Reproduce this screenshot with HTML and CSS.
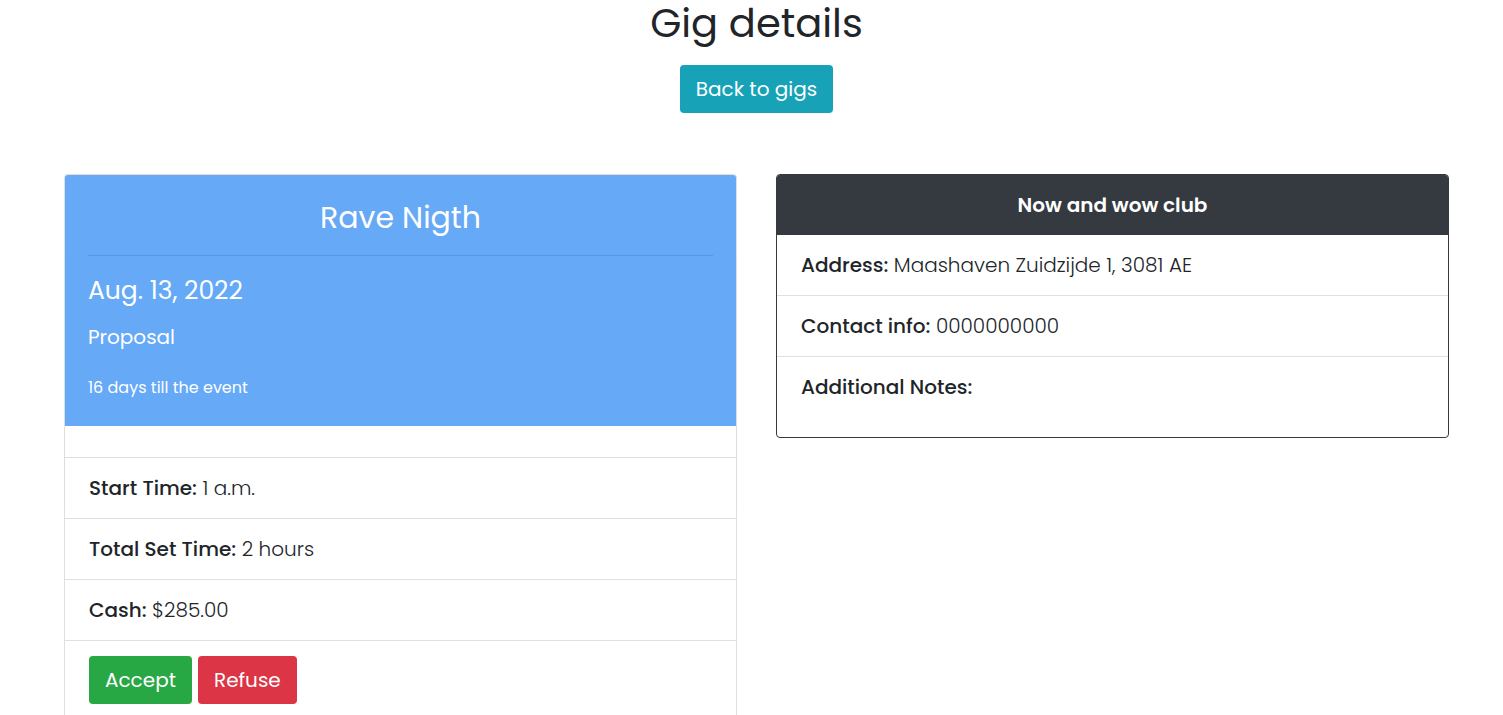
FILE: index.html
```html
<!DOCTYPE html>
<html lang="en">
<head>
<meta charset="utf-8">
<title>Gig details</title>
<link rel="stylesheet" href="styles.css">
</head>
<body>
<header class="top">
  <h1 class="page-title">Gig details</h1>
  <a class="btn btn-info" href="#">Back to gigs</a>
</header>
<main class="cards">
  <section class="card card-gig">
    <div class="gig-body">
      <h3 class="gig-title">Rave Nigth</h3>
      <hr class="gig-rule">
      <h4 class="gig-date">Aug. 13, 2022</h4>
      <p class="gig-status">Proposal</p>
      <p class="gig-days">16 days till the event</p>
    </div>
    <ul class="list">
      <li class="item item-empty"></li>
      <li class="item"><span class="label">Start Time:</span> 1 a.m.</li>
      <li class="item"><span class="label">Total Set Time:</span> 2 hours</li>
      <li class="item"><span class="label">Cash:</span> $285.00</li>
      <li class="item item-actions">
        <a class="btn btn-success" href="#">Accept</a>
        <a class="btn btn-danger" href="#">Refuse</a>
      </li>
    </ul>
  </section>
  <section class="card card-venue">
    <div class="venue-header">Now and wow club</div>
    <ul class="list">
      <li class="item"><span class="label">Address:</span> Maashaven Zuidzijde 1, 3081 AE</li>
      <li class="item"><span class="label">Contact info:</span> 0000000000</li>
      <li class="item item-notes"><span class="label">Additional Notes:</span></li>
    </ul>
  </section>
</main>
</body>
</html>
```
FILE: styles.css
```css
* { box-sizing: border-box; }
html, body { margin: 0; padding: 0; }
body {
  font-family: "Poppins", "Inter", "Noto Sans", sans-serif;
  font-size: 20px;
  font-weight: 300;
  line-height: 30px;
  color: #212529;
  background: #fff;
}
.top {
  display: flex;
  flex-direction: column;
  align-items: center;
  padding: 1px 0 0 10px;
}
.page-title {
  margin: 0 0 20px;
  font-size: 40px;
  font-weight: 400;
  line-height: 44px;
  color: #212529;
}
.btn {
  display: inline-block;
  padding: 9px 16px;
  font-size: 20px;
  line-height: 30px;
  border-radius: 4px;
  color: #fff;
  text-decoration: none;
  font-weight: 400;
}
.btn-info { background: #17a2b8; }
.btn-success { background: #28a745; }
.btn-danger { background: #dc3545; }

.cards {
  display: flex;
  align-items: flex-start;
  gap: 39px;
  padding: 61px 54px 0 64px;
}
.card {
  flex: 1 1 0;
  min-width: 0;
  border-radius: 4px;
  overflow: hidden;
}
.card-gig {
  border: 1px solid rgba(0,0,0,.125);
  border-bottom: none;
}
.card-venue {
  border: 1px solid #343a40;
}
.gig-body {
  background: #65a9f7;
  color: #fff;
  padding: 26px 24px 26px;
  margin: -1px -1px 0;
}
.gig-title {
  margin: 0;
  text-align: center;
  font-size: 30px;
  font-weight: 400;
  line-height: 36px;
}
.gig-rule {
  margin: 19px 0 20px;
  border: 0;
  border-top: 1px solid rgba(0,0,0,.1);
}
.gig-date {
  margin: 0 0 19px;
  font-size: 25px;
  font-weight: 400;
  line-height: 30px;
}
.gig-status {
  margin: 0 0 27px;
  font-size: 20px;
  font-weight: 400;
  line-height: 24px;
}
.gig-days {
  margin: 0;
  font-size: 16px;
  font-weight: 400;
  line-height: 24px;
}
.list {
  list-style: none;
  margin: 0;
  padding: 0;
}
.item {
  padding: 15px 24px;
  border-bottom: 1px solid rgba(0,0,0,.125);
}
.item-empty { height: 32px; }
.item-actions {
  display: flex;
  gap: 6px;
  border-bottom: none;
}
.item-notes { padding-bottom: 35px; border-bottom: none; }
.label { font-weight: 500; }
.venue-header {
  background: #343a40;
  color: #fff;
  text-align: center;
  font-weight: 600;
  padding: 15px 24px;
  line-height: 30px;
}
```
